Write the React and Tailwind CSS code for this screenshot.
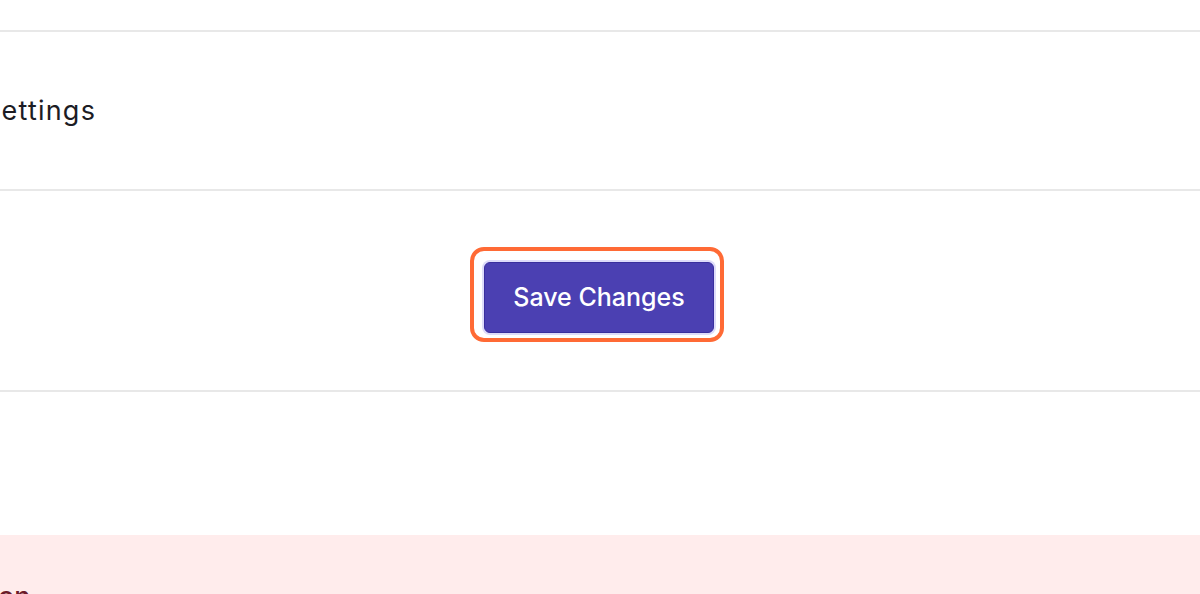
export default function App() {
  return (
    <div className="w-[1200px] h-[594px] overflow-hidden bg-white font-['Inter',sans-serif]">
      <div className="h-[30px]" />
      <div className="h-[2px] bg-[#e8e8e8]" />

      {/* settings row */}
      <div className="h-[157px] flex items-center">
        <span className="-ml-[17px] text-[27px] leading-none tracking-[0.045em] text-[#1c1c24]">Settings</span>
      </div>
      <div className="h-[2px] bg-[#e8e8e8]" />

      {/* action row */}
      <div className="h-[199px] flex items-center justify-center">
        <div className="ml-[-6px] mt-[8px] rounded-[14px] border-[4px] border-[#ff6a35] pt-[11px] pl-[10px] pr-[6px] pb-[5px]">
          <button className="w-[230px] h-[71px] rounded-[6px] bg-[#4b40b2] border border-[#3a2f9e] ring-2 ring-[#dedcfa] text-white text-[25px] font-medium">
            Save Changes
          </button>
        </div>
      </div>
      <div className="h-[2px] bg-[#e8e8e8]" />

      <div className="h-[143px]" />

      {/* danger zone */}
      <div className="h-[200px] bg-[#ffecec] pt-[48px]">
        <span className="block -ml-[2px] text-[27px] leading-none font-medium text-[#6b1a2a]">on</span>
      </div>
    </div>
  );
}
